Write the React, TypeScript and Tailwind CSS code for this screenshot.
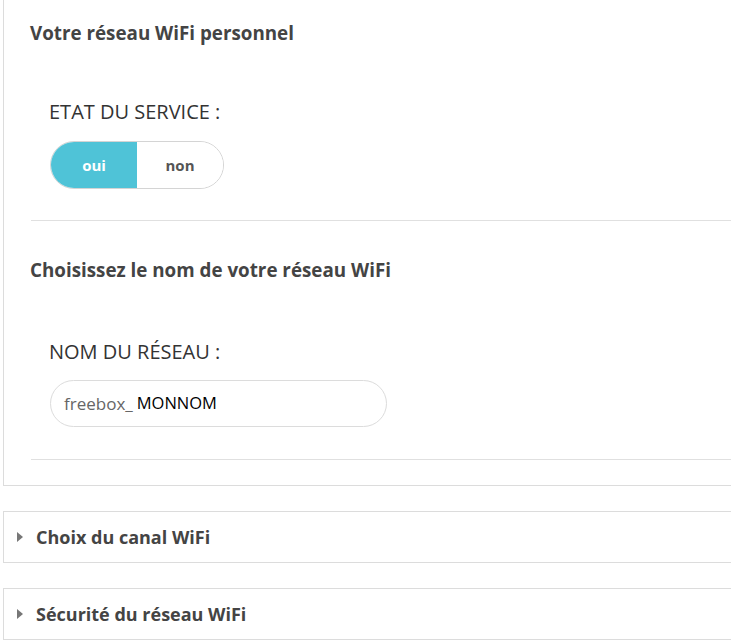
import React from 'react';

const font = "font-['Open_Sans',sans-serif]";

const Accordion = ({ title }: { title: string }) => (
  <div className="mt-[25px] flex h-[52px] items-center border border-r-0 border-[#dcdcdc] bg-white">
    <span className="ml-[13px] mr-[13px] h-0 w-0 border-y-[5px] border-l-[6px] border-y-transparent border-l-[#777]" />
    <span className="text-[18px] font-bold text-[#444]">{title}</span>
  </div>
);

export default function App() {
  return (
    <div className={`${font} min-h-[644px] overflow-hidden bg-white pl-[3px]`}>
      {/* WiFi panel */}
      <div className="border-b border-l border-[#dcdcdc] pb-[25px] pl-[26px]">
        <h2 className="pt-[21px] text-[18.8px] leading-6 font-bold text-[#444]">
          Votre réseau WiFi personnel
        </h2>
        <div className="pl-[19px]">
          <p className="mt-[55px] text-[20px] leading-6 text-[#333]">ETAT DU SERVICE :</p>
          <div className="mt-[17px] ml-[1px] flex h-[48px] w-[174px] overflow-hidden rounded-full border border-[#d4d4d4]">
            <button className="w-[86px] bg-[#4fc3d7] text-[15px] font-bold text-white">oui</button>
            <button className="flex-1 bg-white text-[15px] font-bold text-[#555]">non</button>
          </div>
        </div>
        <div className="mt-[31px] ml-[1px] border-t border-[#e0e0e0]" />

        <h2 className="mt-[37px] text-[18.8px] leading-6 font-bold text-[#444]">
          Choisissez le nom de votre réseau WiFi
        </h2>
        <div className="pl-[19px]">
          <p className="mt-[58px] text-[20px] leading-6 text-[#333]">NOM DU RÉSEAU :</p>
          <div className="mt-[16px] ml-[1px] flex h-[47px] w-[337px] items-center rounded-full border border-[#dcdcdc] pl-[13px]">
            <span className="text-[17px] text-[#666]">freebox_</span>
            <span className="ml-[4px] text-[16.5px] text-black">MONNOM</span>
          </div>
        </div>
        <div className="mt-[32px] ml-[1px] border-t border-[#e0e0e0]" />
      </div>

      <Accordion title="Choix du canal WiFi" />
      <Accordion title="Sécurité du réseau WiFi" />
    </div>
  );
}
